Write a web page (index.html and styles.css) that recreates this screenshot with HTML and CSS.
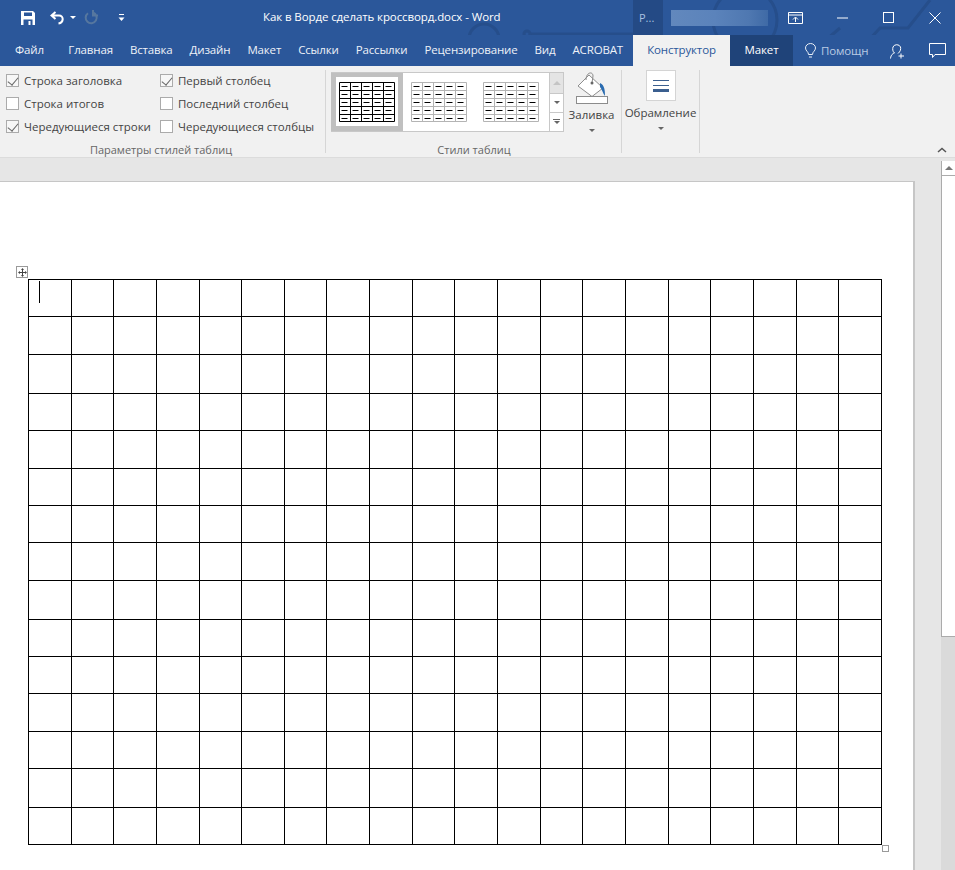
FILE: index.html
```html
<!DOCTYPE html>
<html>

<head>
    <meta charset="utf-8">
    <title>Как в Ворде сделать кроссворд.docx - Word</title>
    <link rel="stylesheet" href="styles.css">
</head>

<body>
    <div class="titlebar">
        <svg class="circuit" width="955" height="66" viewBox="0 0 955 66">
            <circle cx="484" cy="39" r="15" />
            <path d="M530 34H640" />
            <circle cx="527" cy="34" r="3" />
            <circle cx="745" cy="20" r="32" />
            <path d="M845 66L880 28H908L930 0M800 62L840 28" />
        </svg>
        <div class="qat">
            <svg class="icon-save" width="16" height="16" viewBox="0 0 16 16">
                <path d="M1 1H13L15 3V15H1Z" fill="#fff" />
                <rect x="4" y="2.500" width="8" height="3.500" fill="#2b579a" />
                <rect x="3.500" y="9.500" width="9" height="5.500" fill="#2b579a" />
                <rect x="8.500" y="11" width="2" height="4" fill="#fff" />
            </svg>
            <svg class="icon-undo" width="15" height="14" viewBox="0 0 15 14">
                <path d="M5.500 1L1.500 4.500L5.500 8M2 4.500H9C14 4.500 14 11.500 8.500 12.500" fill="none" stroke="#fff" stroke-width="2" />
            </svg>
            <span class="caret-white"></span>
            <svg class="icon-redo" width="15" height="15" viewBox="0 0 15 15">
                <path d="M9 2.500A5.500 5.500 0 1 1 4 3.200M9 0V5.500H14" fill="none" stroke="#56779f" stroke-width="2" />
            </svg>
            <svg class="icon-custom" width="7" height="8" viewBox="0 0 7 8">
                <path d="M1 0.500H6" stroke="#fff" />
                <path d="M0.500 3.500H6.500L3.500 7Z" fill="#fff" />
            </svg>
        </div>
        <div class="doc-title">Как в Ворде сделать кроссворд.docx - Word</div>
        <div class="user-short">Р...</div>
        <div class="user-blur"></div>
        <div class="win-btns">
            <svg class="icon-display" width="15" height="12" viewBox="0 0 15 12">
                <path d="M0.500 0.500H14.500V11.500H0.500ZM0.500 3H14.500M7.500 10V5.500M5 7.500L7.500 5L10 7.500" fill="none" stroke="#fff" />
            </svg>
            <svg class="icon-min" width="11" height="2" viewBox="0 0 11 2">
                <path d="M0 1H11" stroke="#fff" />
            </svg>
            <svg class="icon-max" width="11" height="11" viewBox="0 0 11 11">
                <rect x="0.500" y="0.500" width="10" height="10" fill="none" stroke="#fff" />
            </svg>
            <svg class="icon-close" width="12" height="12" viewBox="0 0 12 12">
                <path d="M0.500 0.500L11.500 11.500M11.500 0.500L0.500 11.500" stroke="#fff" />
            </svg>
        </div>
    </div>

    <div class="tabs">
        <div class="tabs-main">
            <a class="tab tab-file">Файл</a>
            <a class="tab">Главная</a>
            <a class="tab">Вставка</a>
            <a class="tab">Дизайн</a>
            <a class="tab">Макет</a>
            <a class="tab">Ссылки</a>
            <a class="tab">Рассылки</a>
            <a class="tab">Рецензирование</a>
            <a class="tab">Вид</a>
            <a class="tab">ACROBAT</a>
        </div>
        <a class="tab tab-active">Конструктор</a>
        <a class="tab tab-dark">Макет</a>
        <div class="help">
            <svg width="11" height="16" viewBox="0 0 11 16">
                <path d="M3.500 11.500C3.500 8.500 0.500 8 0.500 5A5 4.500 0 0 1 10.500 5C10.500 8 7.500 8.500 7.500 11.500ZM4 14H7" fill="none" stroke="#e8eef6" />
            </svg>
            <span>Помощн</span>
        </div>
        <svg class="icon-share" width="16" height="16" viewBox="0 0 16 16">
            <path d="M0.500 15.500C1 11.500 3 10.500 4.500 10C2.500 8.500 2.500 6 3 4A4 3.500 0 0 1 10.500 4C11 6 10.500 8.500 8 10.500M11 10.500V15.500M8.500 13H14" fill="none" stroke="#fff" />
        </svg>
        <svg class="icon-comment" width="17" height="16" viewBox="0 0 17 16">
            <path d="M0.500 0.500H16.500V11.500H6L3.500 14.500V11.500H0.500Z" fill="none" stroke="#fff" />
        </svg>
    </div>

    <div class="ribbon">
        <div class="group group-options">
            <div class="group-body option-grid">
                <label class="option"><span class="box checked"></span>Строка заголовка</label>
                <label class="option"><span class="box checked"></span>Первый столбец</label>
                <label class="option"><span class="box"></span>Строка итогов</label>
                <label class="option"><span class="box"></span>Последний столбец</label>
                <label class="option"><span class="box checked"></span>Чередующиеся строки</label>
                <label class="option"><span class="box"></span>Чередующиеся столбцы</label>
            </div>
            <div class="group-label">Параметры стилей таблиц</div>
        </div>

        <div class="group group-styles">
            <div class="group-body styles-body">
                <div class="gallery">
                    <div class="thumb thumb-selected">
                        <svg width="56" height="40" viewBox="0 0 56 40">
                            <defs>
                                <pattern id="dashes" width="11" height="8" patternUnits="userSpaceOnUse">
                                    <path d="M2.500 4.500H8.500" stroke="#000" />
                                </pattern>
                            </defs>
                            <rect width="56" height="40" fill="url(#dashes)" />
                            <path d="M0.500 0.500H55.500V39.500H0.500ZM11.500 0V40M22.500 0V40M33.500 0V40M44.500 0V40M0 8.500H56M0 16.500H56M0 24.500H56M0 32.500H56" fill="none" stroke="#000" />
                        </svg>
                    </div>
                    <div class="thumb">
                        <svg width="56" height="40" viewBox="0 0 56 40">
                            <rect width="56" height="40" fill="url(#dashes)" />
                            <path d="M0.500 0.500H55.500V39.500H0.500ZM11.500 0V40M22.500 0V40M33.500 0V40M44.500 0V40M0 8.500H56M0 16.500H56M0 24.500H56M0 32.500H56" fill="none" stroke="#b4b4b4" />
                        </svg>
                    </div>
                    <div class="thumb">
                        <svg width="56" height="40" viewBox="0 0 56 40">
                            <rect width="56" height="40" fill="url(#dashes)" />
                            <path d="M0.500 0.500H55.500V39.500H0.500ZM11.500 0V40M22.500 0V40M33.500 0V40M44.500 0V40M0 8.500H56M0 16.500H56M0 24.500H56M0 32.500H56" fill="none" stroke="#b4b4b4" />
                        </svg>
                    </div>
                    <div class="gallery-scroll">
                        <div class="scroll-btn scroll-up"><span class="arrow-up"></span></div>
                        <div class="scroll-btn"><span class="caret"></span></div>
                        <div class="scroll-btn scroll-more"><span class="more-line"></span><span class="caret"></span></div>
                    </div>
                </div>
                <div class="big-btn btn-fill">
                    <svg width="34" height="33" viewBox="0 0 34 33">
                        <path d="M3 14L14 3L28 16L17 24.500Z" fill="#fff" stroke="#8c8c8c" />
                        <path d="M11 8C11 0 18 -1 18 4L17 11" fill="none" stroke="#8c8c8c" />
                        <circle cx="17" cy="11" r="1.500" fill="#666" />
                        <path d="M25 11C30 13 30 20 30 24C28 22 27 17 25 15Z" fill="#2b6cb0" />
                        <rect x="1.500" y="24.500" width="31" height="7" fill="#fff" stroke="#8c8c8c" />
                    </svg>
                    <span class="btn-text">Заливка</span>
                    <span class="caret"></span>
                </div>
            </div>
            <div class="group-label">Стили таблиц</div>
        </div>

        <div class="group group-border">
            <div class="big-btn btn-border">
                <div class="border-icon">
                    <svg width="16" height="14" viewBox="0 0 16 14">
                        <path d="M0 1.500H16M0 6.500H16" stroke="#3b5f8f" />
                        <path d="M0 11.500H16" stroke="#3b5f8f" stroke-width="3" />
                    </svg>
                </div>
                <span class="btn-text">Обрамление</span>
                <span class="caret"></span>
            </div>
        </div>

        <svg class="icon-collapse" width="10" height="6" viewBox="0 0 10 6">
            <path d="M1 5L5 1.500L9 5" fill="none" stroke="#555" stroke-width="1.500" />
        </svg>
    </div>

    <div class="workspace">
        <div class="page">
            <div class="table-wrap">
                <div class="move-handle">
                    <svg width="9" height="9" viewBox="0 0 9 9">
                        <path d="M4.500 2V7M2 4.500H7" stroke="#444" />
                        <path d="M4.500 0L6 2H3ZM4.500 9L6 7H3ZM0 4.500L2 3V6ZM9 4.500L7 3V6Z" fill="#444" />
                    </svg>
                </div>
                <div class="text-cursor"></div>
                <table class="grid">
                    <tr class="row-37"><td></td><td></td><td></td><td></td><td></td><td></td><td></td><td></td><td></td><td></td><td></td><td></td><td></td><td></td><td></td><td></td><td></td><td></td><td></td><td></td></tr>
                    <tr class="row-38"><td></td><td></td><td></td><td></td><td></td><td></td><td></td><td></td><td></td><td></td><td></td><td></td><td></td><td></td><td></td><td></td><td></td><td></td><td></td><td></td></tr>
                    <tr class="row-39"><td></td><td></td><td></td><td></td><td></td><td></td><td></td><td></td><td></td><td></td><td></td><td></td><td></td><td></td><td></td><td></td><td></td><td></td><td></td><td></td></tr>
                    <tr class="row-37"><td></td><td></td><td></td><td></td><td></td><td></td><td></td><td></td><td></td><td></td><td></td><td></td><td></td><td></td><td></td><td></td><td></td><td></td><td></td><td></td></tr>
                    <tr class="row-38"><td></td><td></td><td></td><td></td><td></td><td></td><td></td><td></td><td></td><td></td><td></td><td></td><td></td><td></td><td></td><td></td><td></td><td></td><td></td><td></td></tr>
                    <tr class="row-37"><td></td><td></td><td></td><td></td><td></td><td></td><td></td><td></td><td></td><td></td><td></td><td></td><td></td><td></td><td></td><td></td><td></td><td></td><td></td><td></td></tr>
                    <tr class="row-37"><td></td><td></td><td></td><td></td><td></td><td></td><td></td><td></td><td></td><td></td><td></td><td></td><td></td><td></td><td></td><td></td><td></td><td></td><td></td><td></td></tr>
                    <tr class="row-38"><td></td><td></td><td></td><td></td><td></td><td></td><td></td><td></td><td></td><td></td><td></td><td></td><td></td><td></td><td></td><td></td><td></td><td></td><td></td><td></td></tr>
                    <tr class="row-39"><td></td><td></td><td></td><td></td><td></td><td></td><td></td><td></td><td></td><td></td><td></td><td></td><td></td><td></td><td></td><td></td><td></td><td></td><td></td><td></td></tr>
                    <tr class="row-37"><td></td><td></td><td></td><td></td><td></td><td></td><td></td><td></td><td></td><td></td><td></td><td></td><td></td><td></td><td></td><td></td><td></td><td></td><td></td><td></td></tr>
                    <tr class="row-37"><td></td><td></td><td></td><td></td><td></td><td></td><td></td><td></td><td></td><td></td><td></td><td></td><td></td><td></td><td></td><td></td><td></td><td></td><td></td><td></td></tr>
                    <tr class="row-38"><td></td><td></td><td></td><td></td><td></td><td></td><td></td><td></td><td></td><td></td><td></td><td></td><td></td><td></td><td></td><td></td><td></td><td></td><td></td><td></td></tr>
                    <tr class="row-37"><td></td><td></td><td></td><td></td><td></td><td></td><td></td><td></td><td></td><td></td><td></td><td></td><td></td><td></td><td></td><td></td><td></td><td></td><td></td><td></td></tr>
                    <tr class="row-39"><td></td><td></td><td></td><td></td><td></td><td></td><td></td><td></td><td></td><td></td><td></td><td></td><td></td><td></td><td></td><td></td><td></td><td></td><td></td><td></td></tr>
                    <tr class="row-37"><td></td><td></td><td></td><td></td><td></td><td></td><td></td><td></td><td></td><td></td><td></td><td></td><td></td><td></td><td></td><td></td><td></td><td></td><td></td><td></td></tr>
                </table>
                <div class="resize-handle"></div>
            </div>
        </div>
        <div class="scrollbar">
            <div class="scroll-arrow"><span class="arrow-up"></span></div>
            <div class="scroll-thumb"></div>
        </div>
    </div>
</body>

</html>
```

FILE: styles.css
```css
* {
    box-sizing: border-box;
}

html,
body {
    height: 100%;
}

body {
    margin: 0;
    height: 870px;
    overflow: hidden;
    display: flex;
    flex-direction: column;
    font-family: "Open Sans", "Noto Sans", Arial, sans-serif;
    font-size: 12px;
    color: #444;
    background-color: #e6e6e6;
}

/* title bar */
.titlebar {
    position: relative;
    flex: none;
    height: 35px;
    display: flex;
    align-items: center;
    background-color: #2b579a;
    color: #fff;
}

.circuit {
    position: absolute;
    left: 0;
    top: 0;
    fill: none;
    stroke: #264e8b;
    stroke-width: 3;
}

.qat {
    position: relative;
    display: flex;
    align-items: center;
    padding-left: 20px;
    width: 263px;
}

.icon-undo {
    margin-left: 14px;
}

.caret-white {
    margin-left: 5px;
    border: 3px solid transparent;
    border-top-color: #fff;
    border-bottom-width: 0;
}

.icon-redo {
    margin-left: 8px;
}

.icon-custom {
    margin-left: 19px;
}

.doc-title {
    position: relative;
    width: 370px;
    padding-bottom: 2px;
    font-size: 11.5px;
    letter-spacing: -0.1px;
    white-space: nowrap;
}

.user-short {
    position: relative;
    width: 30px;
    height: 35px;
    line-height: 35px;
    padding-left: 6px;
    font-size: 11px;
    color: #a9c1e0;
    background-color: #244a85;
}

.user-blur {
    position: relative;
    width: 97px;
    height: 16px;
    margin-left: 8px;
    background: linear-gradient(90deg, #6288bd, #5b83bb 45%, #4f78b1 80%, #3f6aa6);
}

.win-btns {
    position: relative;
    display: flex;
    align-items: center;
    margin-left: 20px;
}

.icon-min {
    margin-left: 34px;
}

.icon-max {
    margin-left: 35px;
}

.icon-close {
    margin-left: 35px;
}

/* tabs */
.tabs {
    position: relative;
    flex: none;
    height: 31px;
    display: flex;
    align-items: stretch;
    background-color: #2b579a;
    color: #eef2f8;
    font-size: 11.5px;
    letter-spacing: -0.15px;
}

.tabs-main {
    display: flex;
    width: 633px;
    padding-left: 6px;
}

.tab {
    display: flex;
    align-items: center;
    padding: 0 8.5px 2px;
    white-space: nowrap;
}

.tab-file {
    padding: 0 16px 2px 9px;
}

.tab-active {
    justify-content: center;
    width: 97px;
    padding: 0 0 2px;
    background-color: #f1f1f1;
    color: #2b579a;
}

.tab-dark {
    justify-content: center;
    width: 63px;
    padding: 0 0 2px;
    background-color: #1f4379;
    color: #fff;
}

.help {
    display: flex;
    align-items: center;
    gap: 5px;
    margin-left: 12px;
    width: 85px;
    color: #b9cbe4;
}

.icon-share {
    align-self: center;
    margin-right: 23px;
}

.icon-comment {
    align-self: center;
}

/* ribbon */
.ribbon {
    position: relative;
    flex: none;
    height: 92px;
    display: flex;
    background-color: #f1f1f1;
    border-bottom: 1px solid #dcdcdc;
}

.group {
    display: flex;
    flex-direction: column;
    margin: 4px 0;
    border-right: 1px solid #d6d6d6;
}

.group-body {
    flex: 1;
}

.group-label {
    height: 10px;
    line-height: 14px;
    font-size: 11px;
    text-align: center;
    color: #666;
    white-space: nowrap;
}

.group-options {
    width: 326px;
    padding-left: 6px;
}

.group-options .group-label {
    padding-right: 9px;
}

.option-grid {
    display: grid;
    grid-template-columns: 154px auto;
    grid-auto-rows: 23px;
    margin-top: -1px;
}

.option {
    display: flex;
    align-items: center;
    gap: 5px;
    font-size: 11.5px;
    white-space: nowrap;
}

.box {
    position: relative;
    flex: none;
    width: 13px;
    height: 13px;
    border: 1px solid #ababab;
    background-color: #fff;
}

.checked {
    background-color: #f7f7f7;
}

/* the tick is two borders of a turned box */
.checked::after {
    content: "";
    position: absolute;
    left: 3px;
    top: 0;
    width: 5px;
    height: 9px;
    border-right: 1px solid #666;
    border-bottom: 1px solid #666;
    transform: rotate(40deg);
}

.group-styles {
    width: 296px;
    padding-left: 5px;
}

.group-styles .group-label {
    padding-right: 4px;
}

.styles-body {
    display: flex;
}

.gallery {
    display: flex;
    width: 233px;
    height: 60px;
    margin-top: 2px;
    background-color: #fff;
    border: 1px solid #c8c8c8;
    border-left: 0;
}

.thumb {
    display: flex;
    align-items: center;
    justify-content: center;
    width: 72px;
    height: 58px;
}

.thumb-selected {
    width: 72px;
    border: 5px solid #c0c0c0;
    border-top-width: 4px;
}

.gallery-scroll {
    display: flex;
    flex-direction: column;
    width: 14px;
    margin-left: 2px;
    border-left: 1px solid #c8c8c8;
}

.scroll-btn {
    display: flex;
    flex-direction: column;
    align-items: center;
    justify-content: center;
    gap: 1px;
    height: 19px;
    border-bottom: 1px solid #c8c8c8;
}

.scroll-up {
    height: 22px;
    background-color: #e4e4e4;
}

.scroll-up .arrow-up {
    border-bottom-color: #c4c4c4;
}

.scroll-more {
    border-bottom: 0;
}

.more-line {
    width: 7px;
    height: 1px;
    background-color: #666;
}

.caret {
    border: 3px solid transparent;
    border-top-color: #666;
    border-bottom-width: 0;
}

.arrow-up {
    border: 4px solid transparent;
    border-bottom-color: #777;
    border-top-width: 0;
}

.big-btn {
    display: flex;
    flex-direction: column;
    align-items: center;
    white-space: nowrap;
}

.btn-text {
    font-size: 11.5px;
}

.btn-fill {
    width: 45px;
    margin: 2px 0 0 5px;
}

.btn-fill .btn-text {
    margin-top: 2px;
}

.btn-fill .caret {
    margin-top: 7px;
}

.group-border {
    width: 78px;
}

.border-icon {
    display: flex;
    align-items: center;
    justify-content: center;
    width: 30px;
    height: 31px;
    background-color: #fff;
    border: 1px solid #d4d4d4;
}

.btn-border .btn-text {
    margin-top: 4px;
}

.btn-border .caret {
    margin-top: 7px;
}

.icon-collapse {
    position: absolute;
    right: 8px;
    top: 81px;
}

/* document area */
.workspace {
    flex: 1;
    min-height: 0;
    display: flex;
}

.page {
    flex: none;
    width: 915px;
    margin-top: 23px;
    padding: 97px 0 0 28px;
    background-color: #fff;
    border-top: 1px solid #c6c6c6;
    border-right: 2px solid #c6c6c6;
}

.table-wrap {
    position: relative;
    width: 854px;
}

.grid {
    width: 854px;
    table-layout: fixed;
    border-collapse: collapse;
    border: 1px solid #000;
}

.grid td {
    padding: 0;
    border: 1px solid #000;
}

.row-37 {
    height: 37px;
}

.row-38 {
    height: 38px;
}

.row-39 {
    height: 39px;
}

.move-handle {
    position: absolute;
    left: -12px;
    top: -13px;
    width: 12px;
    height: 12px;
    display: flex;
    align-items: center;
    justify-content: center;
    background-color: #fff;
    border: 1px solid #9a9a9a;
}

.text-cursor {
    position: absolute;
    left: 11px;
    top: 2px;
    width: 1px;
    height: 22px;
    background-color: #000;
}

.resize-handle {
    position: absolute;
    left: 854px;
    top: 566px;
    width: 7px;
    height: 7px;
    background-color: #fff;
    border: 1px solid #9a9a9a;
}

.scrollbar {
    flex: none;
    display: flex;
    flex-direction: column;
    width: 14px;
    margin: 3px 0 0 26px;
    background-color: #dadada;
}

.scroll-arrow {
    display: flex;
    align-items: center;
    justify-content: center;
    height: 15px;
    background-color: #fff;
    border-left: 1px solid #ababab;
    border-bottom: 1px solid #ababab;
}

.scroll-thumb {
    height: 461px;
    background-color: #fff;
    border-left: 1px solid #ababab;
    border-bottom: 1px solid #ababab;
}
```
